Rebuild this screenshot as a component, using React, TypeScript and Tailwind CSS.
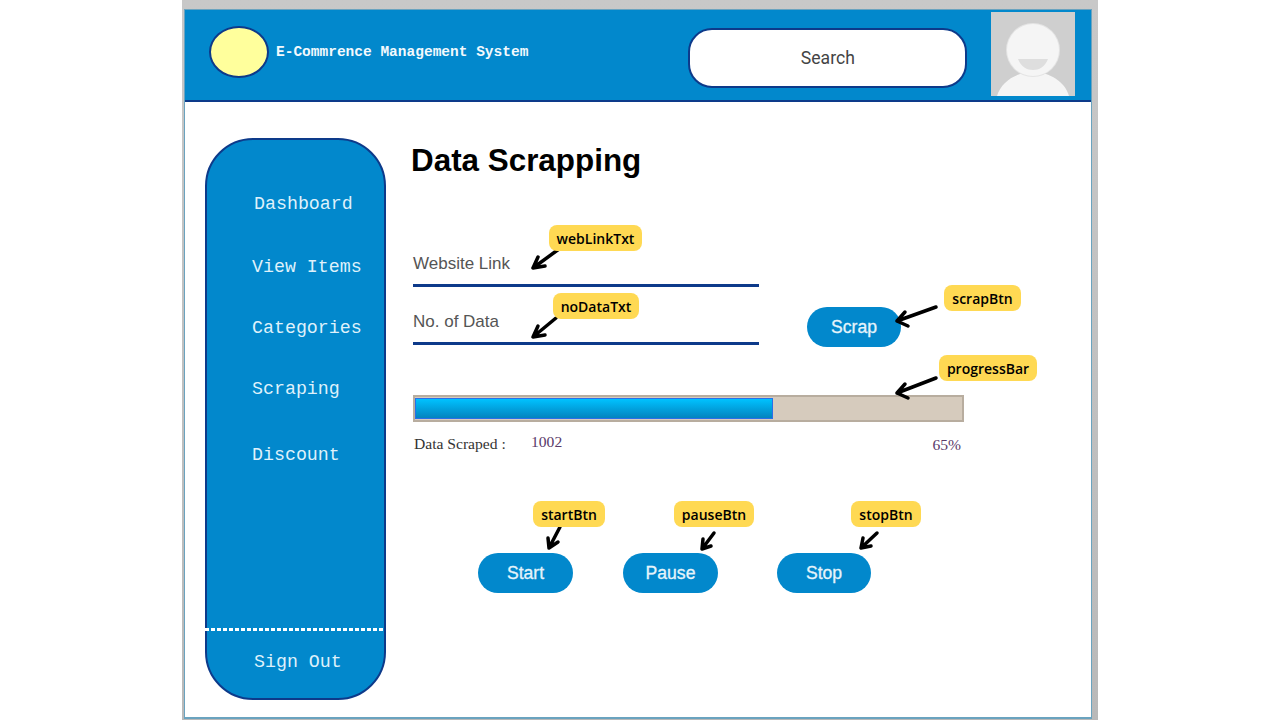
import React from 'react';

const NAV_MONO = { fontFamily: '"Liberation Mono", monospace' };

const ActionButton: React.FC<{ label: string; className?: string }> = ({ label, className = '' }) => (
  <button
    className={`h-[40px] rounded-[20px] bg-[#0288cc] text-[#e6f4fb] text-[17.6px] [font-family:'Liberation_Sans',sans-serif] [-webkit-text-stroke:0.3px_#e6f4fb] ${className}`}
  >
    {label}
  </button>
);

const Tag: React.FC<{ label: string; className: string }> = ({ label, className }) => (
  <div
    className={`absolute h-[26px] rounded-[8px] bg-[#ffd953] text-black text-[14px] font-semibold flex items-center justify-center [font-family:'Open_Sans',sans-serif] ${className}`}
  >
    {label}
  </div>
);

// annotation arrows, in page coordinates
const ARROWS = [
  'M559 249 L533 268 M533 268 L545 266 M533 268 L538 257',
  'M556 318 L533 337 M533 337 L545 335 M533 337 L538 326',
  'M936 307 L897 321 M897 321 L908 326 M897 321 L905 312',
  'M936 378 L897 393 M897 393 L908 398 M897 393 L905 384',
  'M560 527 L549 548 M549 548 L558 542 M549 548 L548 538',
  'M714 533 L702 549 M702 549 L711 546 M702 549 L703 539',
  'M877 533 L861 548 M861 548 L871 546 M861 548 L863 538',
];

const navItems = [
  { label: 'Dashboard', cls: 'mt-[53px] ml-[47px]' },
  { label: 'View Items', cls: 'mt-[41px] ml-[45px]' },
  { label: 'Categories', cls: 'mt-[39px] ml-[45px]' },
  { label: 'Scraping', cls: 'mt-[39px] ml-[45px]' },
  { label: 'Discount', cls: 'mt-[44px] ml-[45px]' },
];

export default function App() {
  return (
    <div className="relative w-[1280px] h-[720px] bg-white overflow-hidden flex">
      {/* screenshot frame with its grey shadow */}
      <div className="ml-[182px] w-[916px] h-[720px] pt-[9px] pl-[2px] pr-[6px] bg-gradient-to-b from-[#c8c8c8] to-[#b9b9b9]">
        <div className="h-[710px] bg-white border border-b-2 border-[#6aa3bf] flex flex-col">
          <header className="h-[92px] shrink-0 bg-[#0288cc] border-b-2 border-[#0d3a8a] flex items-center">
            <div className="ml-[24px] w-[60px] h-[52px] rounded-[50%] bg-[#ffff9c] border-2 border-[#0d3a8a] -mt-[7px]" />
            <div className="ml-[7px] text-[14.5px] font-bold text-[#f2f9fd] -mt-[4px]" style={NAV_MONO}>
              E-Commrence Management System
            </div>
            <div className="ml-[160px] w-[279px] h-[60px] rounded-[24px] bg-white border-2 border-[#0d3a8a] flex items-center justify-center text-[17.6px] text-[#444] [font-family:'Roboto',sans-serif] mt-[5px] pt-[2px]">
              Search
            </div>
            <svg className="ml-[24px] -mt-[2px]" width="84" height="84" viewBox="0 0 84 84">
              <rect width="84" height="84" fill="#cfcfcf" />
              <path d="M6 84 C10 70 25 60 42 60 C59 60 74 70 78 84 Z" fill="#f5f5f5" />
              <circle cx="42" cy="38" r="27" fill="#e4e4e4" />
              <circle cx="42" cy="38" r="26" fill="#f5f5f5" />
              <path d="M27 47 H57 C54 55 48 58 42 58 C36 58 30 55 27 47 Z" fill="#dedede" />
            </svg>
          </header>

          <div className="flex pl-[20px] pt-[36px]">
            <aside className="w-[181px] h-[562px] rounded-[48px] bg-[#0288cc] border-2 border-[#0d3a8a] flex flex-col text-[18.3px] text-[#dff1fb]" style={NAV_MONO}>
              {navItems.map((item) => (
                <div key={item.label} className={`leading-[22px] ${item.cls}`}>
                  {item.label}
                </div>
              ))}
              <div className="mt-auto h-[3px] -ml-[2px] mr-[1px] bg-[repeating-linear-gradient(90deg,#fff_0_4px,transparent_4px_6px)]" />
              <div className="mt-[20px] mb-[25px] ml-[47px] leading-[22px]">Sign Out</div>
            </aside>

            <main className="ml-[25px] w-[560px] [font-family:'Liberation_Sans',sans-serif]">
              <h1 className="h-[44px] leading-[46px] text-[31.4px] font-bold text-black">Data Scrapping</h1>

              <div className="flex mt-[68px] ml-[2px]">
                <div className="w-[346px]">
                  <div className="h-[34px] leading-[28px] text-[17px] text-[#555]">Website Link</div>
                  <div className="h-[3px] bg-[#0d3a8a]" />
                  <div className="h-[34px] mt-[21px] leading-[28px] text-[17px] text-[#555]">No. of Data</div>
                  <div className="h-[3px] bg-[#0d3a8a]" />
                </div>
                <ActionButton label="Scrap" className="w-[94px] ml-[48px] mt-[57px]" />
              </div>

              <div className="ml-[2px] mt-[48px] w-[551px] h-[27px] bg-[#d6cbbd] border-2 border-[#b8ad9f] pt-[1px]">
                <div className="w-[358px] h-[21px] bg-gradient-to-b from-[#00c2ff] to-[#0284bf] border border-[#2a6fe8]" />
              </div>

              <div className="ml-[3px] mt-[12px] w-[547px] flex items-start text-[15.6px] leading-[20px] [font-family:'Liberation_Serif',serif] text-[#333]">
                <span className="w-[117px]">Data Scraped :</span>
                <span className="text-[#5a3a6a] -mt-[2px]">1002</span>
                <span className="ml-auto text-[#5a3a6a] mt-[1px]">65%</span>
              </div>

              <div className="flex mt-[98px] ml-[67px]">
                <ActionButton label="Start" className="w-[95px]" />
                <ActionButton label="Pause" className="w-[95px] ml-[50px]" />
                <ActionButton label="Stop" className="w-[94px] ml-[59px]" />
              </div>
            </main>
          </div>
        </div>
      </div>

      {/* annotations on top of the mock */}
      <svg className="absolute left-0 top-0 pointer-events-none" width="1280" height="720" viewBox="0 0 1280 720">
        {ARROWS.map((d) => (
          <path key={d} d={d} fill="none" stroke="#000" strokeWidth="3.5" strokeLinecap="round" strokeLinejoin="round" />
        ))}
      </svg>
      <Tag label="webLinkTxt" className="left-[549px] top-[225px] w-[93px]" />
      <Tag label="noDataTxt" className="left-[553px] top-[293px] w-[86px]" />
      <Tag label="scrapBtn" className="left-[944px] top-[285px] w-[77px]" />
      <Tag label="progressBar" className="left-[939px] top-[355px] w-[98px]" />
      <Tag label="startBtn" className="left-[533px] top-[501px] w-[72px]" />
      <Tag label="pauseBtn" className="left-[674px] top-[501px] w-[80px]" />
      <Tag label="stopBtn" className="left-[851px] top-[501px] w-[70px]" />
    </div>
  );
}
